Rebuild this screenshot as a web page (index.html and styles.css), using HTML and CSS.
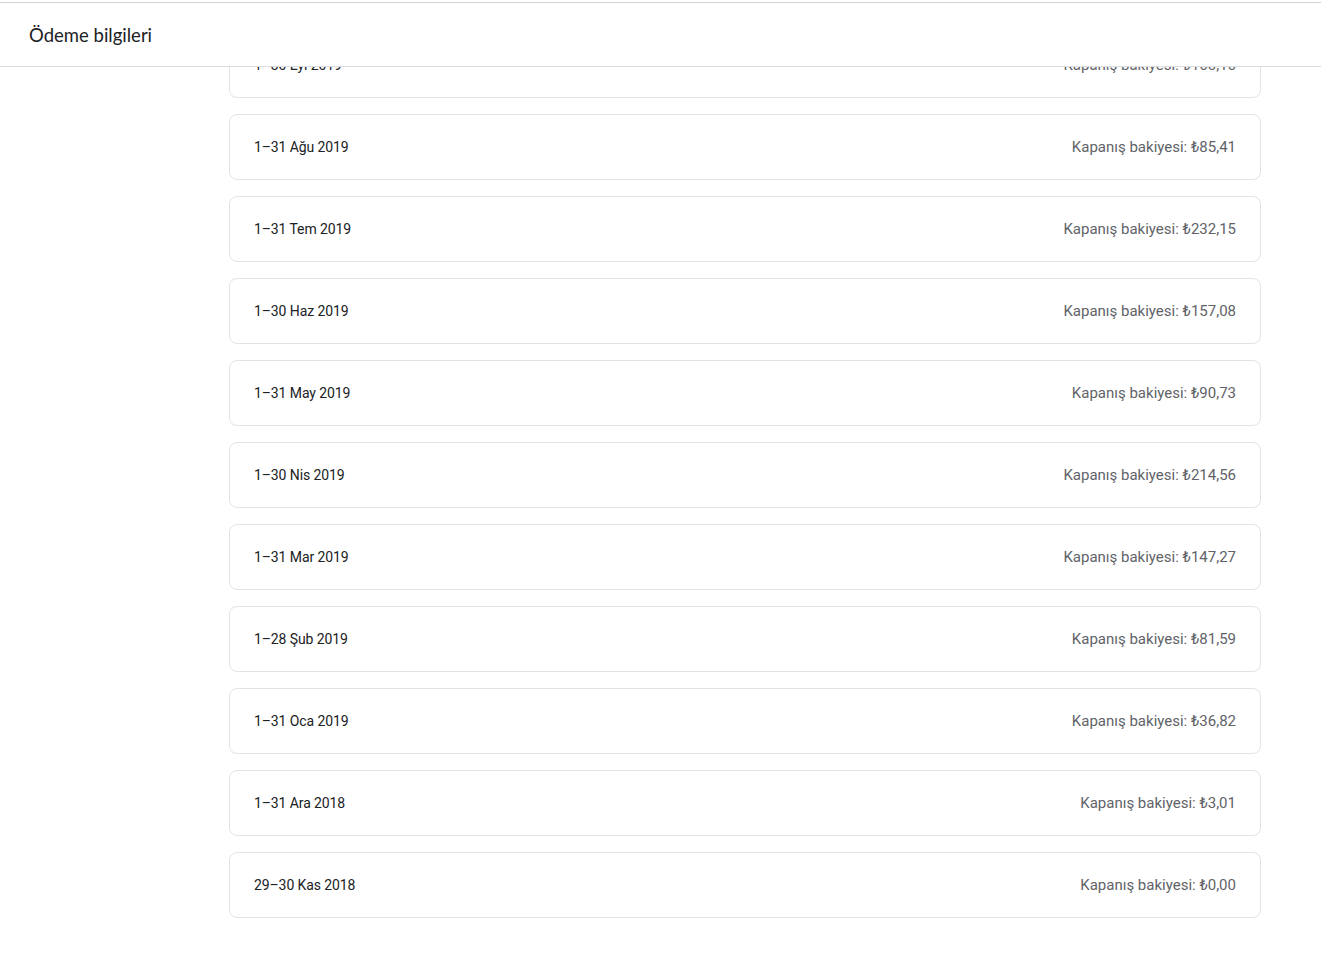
FILE: index.html
```html
<!DOCTYPE html>
<html lang="tr">
<head>
    <meta charset="UTF-8">
    <meta name="viewport" content="width=device-width, initial-scale=1.0">
    <title>Ödeme bilgileri</title>
    <link rel="stylesheet" href="styles.css">
</head>
<body>
    <header class="topbar">
        <h1 class="topbar-title">Ödeme bilgileri</h1>
    </header>

    <main class="statements">
        <div class="statement">
            <span class="period">1–30 Eyl 2019</span>
            <span class="balance">Kapanış bakiyesi: ₺160,16</span>
        </div>
        <div class="statement">
            <span class="period">1–31 Ağu 2019</span>
            <span class="balance">Kapanış bakiyesi: ₺85,41</span>
        </div>
        <div class="statement">
            <span class="period">1–31 Tem 2019</span>
            <span class="balance">Kapanış bakiyesi: ₺232,15</span>
        </div>
        <div class="statement">
            <span class="period">1–30 Haz 2019</span>
            <span class="balance">Kapanış bakiyesi: ₺157,08</span>
        </div>
        <div class="statement">
            <span class="period">1–31 May 2019</span>
            <span class="balance">Kapanış bakiyesi: ₺90,73</span>
        </div>
        <div class="statement">
            <span class="period">1–30 Nis 2019</span>
            <span class="balance">Kapanış bakiyesi: ₺214,56</span>
        </div>
        <div class="statement">
            <span class="period">1–31 Mar 2019</span>
            <span class="balance">Kapanış bakiyesi: ₺147,27</span>
        </div>
        <div class="statement">
            <span class="period">1–28 Şub 2019</span>
            <span class="balance">Kapanış bakiyesi: ₺81,59</span>
        </div>
        <div class="statement">
            <span class="period">1–31 Oca 2019</span>
            <span class="balance">Kapanış bakiyesi: ₺36,82</span>
        </div>
        <div class="statement">
            <span class="period">1–31 Ara 2018</span>
            <span class="balance">Kapanış bakiyesi: ₺3,01</span>
        </div>
        <div class="statement">
            <span class="period">29–30 Kas 2018</span>
            <span class="balance">Kapanış bakiyesi: ₺0,00</span>
        </div>
    </main>
</body>
</html>
```

FILE: styles.css
```css
body {
    margin: 0;
    background: #fff;
    font-family: Roboto, 'Noto Sans', Arial, sans-serif;
    color: #202124;
}

/* sabit üst çubuk, liste altından kayar */
.topbar {
    position: fixed;
    top: 2px;
    left: 0;
    right: 0;
    height: 63px;
    display: flex;
    align-items: center;
    padding-left: 29px;
    background: #fff;
    border-top: 1px solid #d3d3d3;
    border-bottom: 1px solid #dadce0;
    z-index: 2;
}
.topbar-title {
    margin: 0;
    padding-top: 1px;
    font-family: Lato, Roboto, sans-serif;
    font-size: 18.5px;
    font-weight: 400;
    color: #202124;
}

.statements {
    display: flex;
    flex-direction: column;
    gap: 16px;
    width: 1032px;
    margin-left: 229px;
    padding: 32px 0 40px;
}
.statement {
    box-sizing: border-box;
    height: 66px;
    display: flex;
    align-items: center;
    justify-content: space-between;
    padding: 0 24px;
    border: 1px solid #e3e3e3;
    border-radius: 8px;
}
.period {
    font-size: 14px;
    letter-spacing: -0.1px;
    color: #202124;
}
.balance {
    font-size: 15px;
    color: #5f6368;
}
```
